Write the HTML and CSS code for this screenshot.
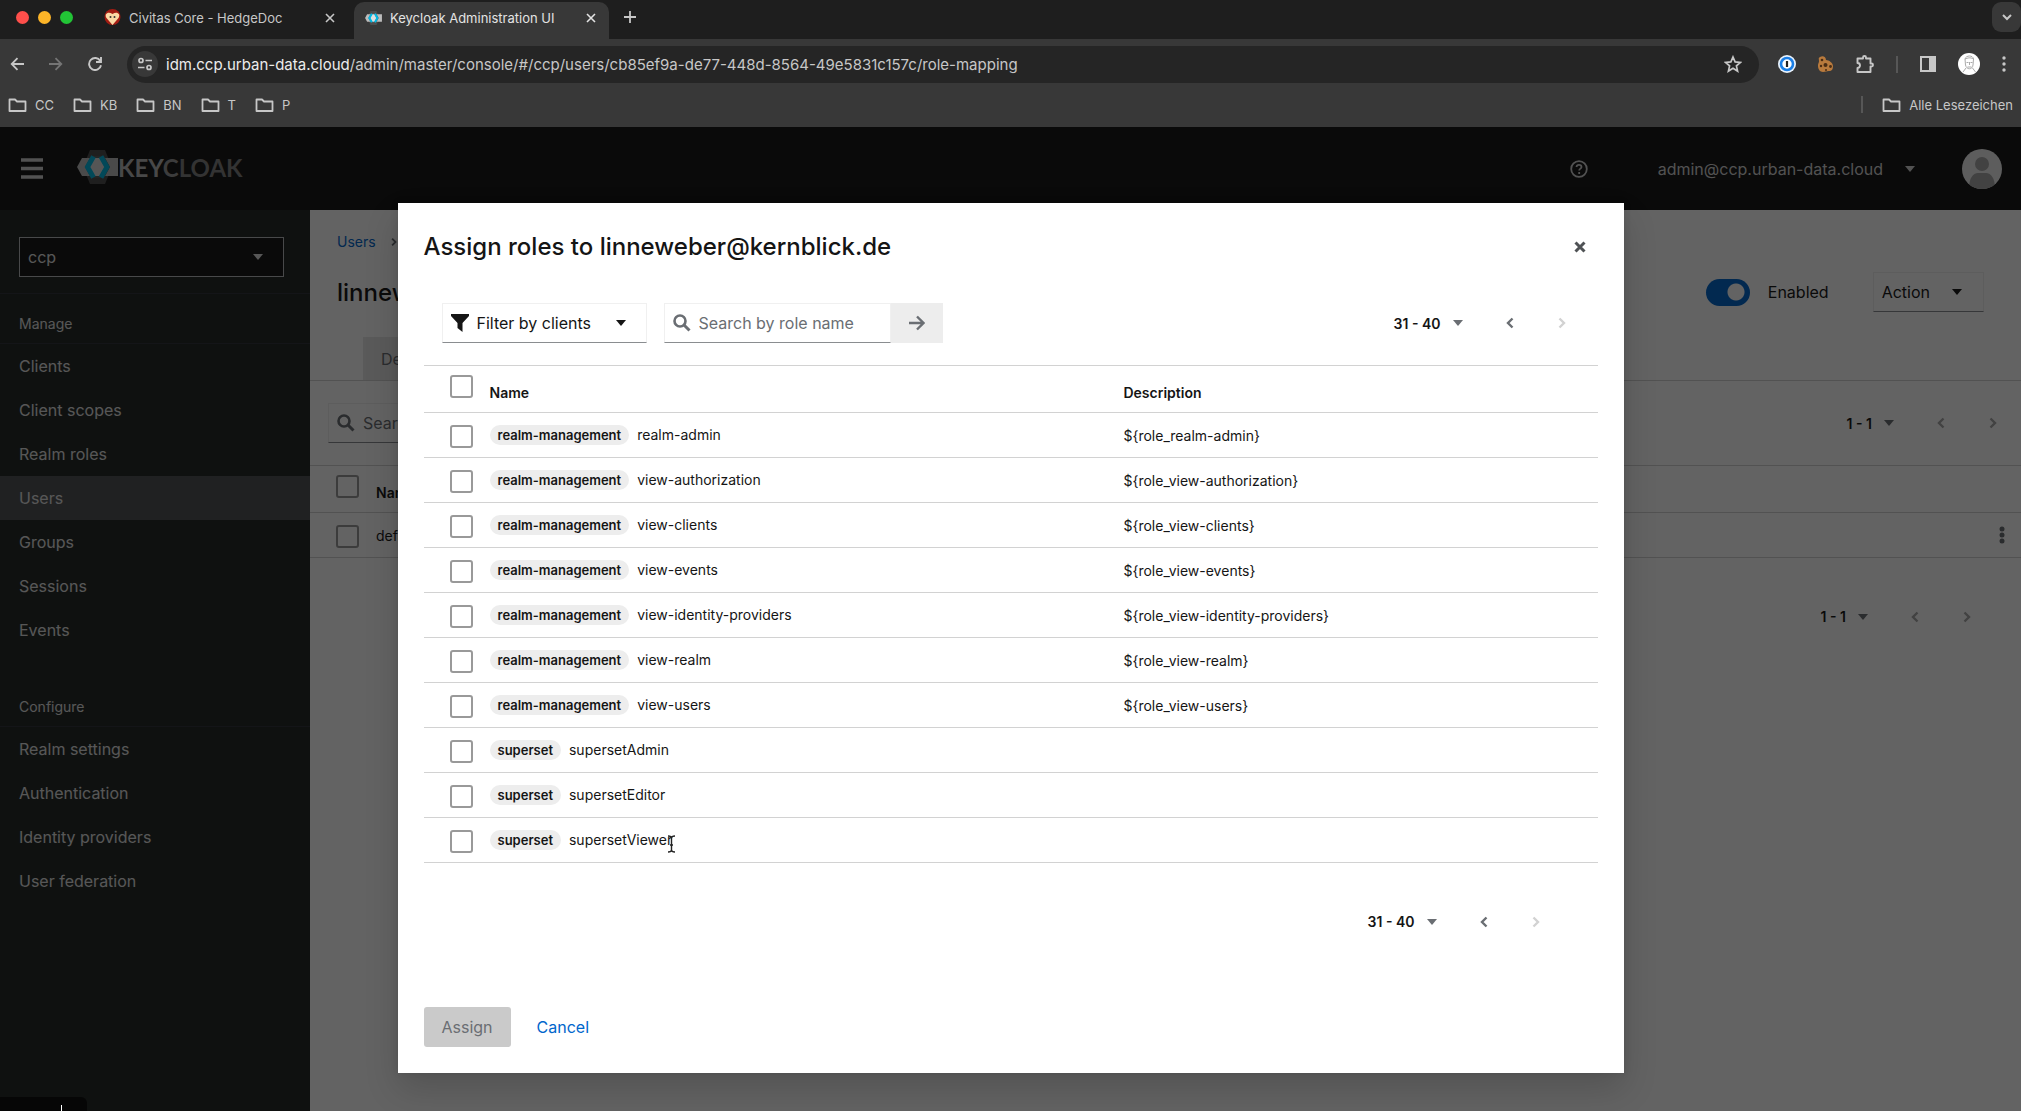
FILE: index.html
```
<!DOCTYPE html>
<html lang="en">
<head>
    <meta charset="UTF-8">
    <meta name="viewport" content="width=device-width, initial-scale=1.0">
    <title>Keycloak Administration UI</title>
    <link rel="stylesheet" href="styles.css">
</head>
<body>
    <!-- shared icons -->
    <svg class="sprite" aria-hidden="true">
        <symbol id="folder" viewBox="0 0 19 16"><path d="M1.500 2.500h5.500l2 2h8.500v9.500h-16z" fill="none" stroke="currentColor" stroke-width="1.800" stroke-linejoin="round"/></symbol>
        <symbol id="cross" viewBox="0 0 10 10"><path d="M1 1l8 8M9 1l-8 8" fill="none" stroke="currentColor" stroke-width="1.600"/></symbol>
        <symbol id="caret" viewBox="0 0 10 6"><path d="M0 0h10L5 6z" fill="currentColor"/></symbol>
        <symbol id="left" viewBox="0 0 8 12"><path d="M6.500 1.500L2 6l4.500 4.500" fill="none" stroke="currentColor" stroke-width="2.400"/></symbol>
        <symbol id="right" viewBox="0 0 8 12"><path d="M1.500 1.500L6 6l-4.500 4.500" fill="none" stroke="currentColor" stroke-width="2.400"/></symbol>
        <symbol id="search" viewBox="0 0 18 18"><circle cx="7" cy="7" r="5.500" fill="none" stroke="currentColor" stroke-width="2.600"/><path d="M11 11l5.500 5.500" stroke="currentColor" stroke-width="3"/></symbol>
        <symbol id="dots" viewBox="0 0 4 18"><circle cx="2" cy="3" r="1.700"/><circle cx="2" cy="9" r="1.700"/><circle cx="2" cy="15" r="1.700"/></symbol>
        <symbol id="keycloak" viewBox="0 0 41 34"><path d="M13 0h15l7 17-7 17H13L6 17z" fill="#4d4d4d"/><path d="M5 8h36v18H5L0 17z" fill="#bdbdbd"/><path d="M14 6h13l6 11-6 11H14L8 17z" fill="#5a5a5a"/><path d="M17 8h6l5 9-5 9h-6l-5-9z" fill="#dedede"/><path d="M16.500 6.500L10.500 17l6 10.500M24 6.500L30 17l-6 10.500" fill="none" stroke="#00b8e3" stroke-width="5"/></symbol>
    </svg>

    <header class="browser">
        <div class="tab-strip">
            <div class="lights"><span class="light red"></span><span class="light yellow"></span><span class="light green"></span></div>
            <div class="tab">
                <svg width="17" height="17" viewBox="0 0 17 17"><circle cx="8.500" cy="8" r="8" fill="#a31c13"/><path d="M8.500 16L2.500 9C0 5 4 2 8.500 5 13 2 17 5 14.500 9z" fill="#fbd9a5"/><circle cx="6.500" cy="8" r="1" fill="#333"/><circle cx="10.500" cy="8" r="1" fill="#333"/></svg>
                <span class="tab-title">Civitas Core - HedgeDoc</span>
                <button class="icon-button" aria-label="Close tab"><svg width="10" height="10"><use href="#cross"/></svg></button>
            </div>
            <div class="tab active">
                <svg width="17" height="14"><use href="#keycloak"/></svg>
                <span class="tab-title">Keycloak Administration UI</span>
                <button class="icon-button" aria-label="Close tab"><svg width="10" height="10"><use href="#cross"/></svg></button>
            </div>
            <button class="icon-button new-tab" aria-label="New tab"><svg width="12" height="12" viewBox="0 0 12 12"><path d="M6 0v12M0 6h12" stroke="currentColor" stroke-width="1.800"/></svg></button>
            <button class="icon-button tab-search" aria-label="Search tabs"><svg width="10" height="7" viewBox="0 0 10 7"><path d="M1 1l4 4 4-4" fill="none" stroke="currentColor" stroke-width="2"/></svg></button>
        </div>
        <div class="toolbar">
            <button class="icon-button nav-button" aria-label="Back"><svg width="14" height="14" viewBox="0 0 14 14"><path d="M14 7H2M7.500 1.200L1.700 7l5.800 5.800" fill="none" stroke="currentColor" stroke-width="1.800"/></svg></button>
            <button class="icon-button nav-button faded" aria-label="Forward"><svg width="14" height="14" viewBox="0 0 14 14"><path d="M0 7h12M6.500 1.200L12.300 7l-5.800 5.800" fill="none" stroke="currentColor" stroke-width="1.800"/></svg></button>
            <button class="icon-button nav-button" aria-label="Reload"><svg width="14" height="14" viewBox="0 0 14 14"><path d="M12.300 4A6 6 0 1 0 13 8.200M13 0v5H8" fill="none" stroke="currentColor" stroke-width="1.900"/></svg></button>
            <div class="omnibox">
                <button class="icon-button site-info" aria-label="Site information"><svg width="14" height="14" viewBox="0 0 14 14"><g fill="none" stroke="currentColor" stroke-width="1.700"><circle cx="3" cy="3.500" r="2"/><path d="M7.500 3.500H14M0 10.500h6.500"/><circle cx="11" cy="10.500" r="2"/></g></svg></button>
                <a class="url" href="#"><span class="host">idm.ccp.urban-data.cloud</span>/admin/master/console/#/ccp/users/cb85ef9a-de77-448d-8564-49e5831c157c/role-mapping</a>
                <button class="icon-button" aria-label="Bookmark"><svg width="18" height="18" viewBox="0 0 18 18"><path d="M9 2l2.100 4.900 5.300.5-4 3.500 1.200 5.200L9 13.300l-4.600 2.800 1.200-5.200-4-3.500 5.300-.5z" fill="none" stroke="currentColor" stroke-width="1.700"/></svg></button>
            </div>
            <div class="extensions">
                <button class="icon-button" aria-label="1Password"><svg width="18" height="18" viewBox="0 0 18 18"><circle cx="9" cy="9" r="9" fill="#e8f2fc"/><circle cx="9" cy="9" r="6" fill="#fff" stroke="#1a7ee6" stroke-width="2.600"/><path d="M9 6v6" stroke="#222" stroke-width="2.200"/></svg></button>
                <button class="icon-button" aria-label="Cookies"><svg width="16" height="16" viewBox="0 0 16 16"><path d="M2 1c3-2 6 0 6 3 3 0 7 3 7 6s-1 5-4 5-3 1-6 1-5-3-5-6 1-3 1-5-1-3 1-4z" fill="#b87a3d"/><g fill="#4a2d14"><circle cx="4" cy="4" r="1.300"/><circle cx="7.500" cy="9" r="2"/><circle cx="3" cy="10" r="1.200"/><circle cx="12.500" cy="10.500" r="1.400"/><circle cx="8" cy="14" r="1"/></g></svg></button>
                <button class="icon-button" aria-label="Extensions"><svg width="18" height="18" viewBox="0 0 18 18"><path d="M1.500 3.500h5.500V2.500a1.500 1.500 0 0 1 3 0v1h4.500v5H15.500a1.500 1.500 0 0 1 0 3h-1V17h-13v-4a2.500 2.500 0 0 0 0-5z" fill="none" stroke="currentColor" stroke-width="1.900" stroke-linejoin="round"/></svg></button>
                <span class="divider"></span>
                <button class="icon-button" aria-label="Side panel"><svg width="16" height="16" viewBox="0 0 16 16"><path d="M1 1h14v14H1z" fill="none" stroke="currentColor" stroke-width="2"/><path d="M9 1h6v14H9z" fill="currentColor"/></svg></button>
                <button class="icon-button" aria-label="Profile"><svg width="22" height="22" viewBox="0 0 22 22"><circle cx="11" cy="11" r="11" fill="#fff"/><g fill="none" stroke="#aaa" stroke-width="1"><path d="M7 6c1-4 8-4 8.500 0l-.5 6c-.5 5-6.500 5-7.500 0zM7 6c3-1 5-2 8.500 0M8 15l-3 4M14.500 15l3 4M8.500 9.500h2M12.500 9.500h2M11.500 9v3M9.500 14h4"/></g></svg></button>
                <button class="icon-button" aria-label="Menu"><svg width="4" height="18" fill="currentColor"><use href="#dots"/></svg></button>
            </div>
        </div>
        <nav class="bookmarks" aria-label="Bookmarks">
            <a href="#"><svg width="19" height="16"><use href="#folder"/></svg>CC</a>
            <a href="#"><svg width="19" height="16"><use href="#folder"/></svg>KB</a>
            <a href="#"><svg width="19" height="16"><use href="#folder"/></svg>BN</a>
            <a href="#"><svg width="19" height="16"><use href="#folder"/></svg>T</a>
            <a href="#"><svg width="19" height="16"><use href="#folder"/></svg>P</a>
            <span class="divider"></span>
            <a href="#"><svg width="19" height="16"><use href="#folder"/></svg>Alle Lesezeichen</a>
        </nav>
    </header>

    <div class="app">
        <header class="masthead">
            <button class="icon-button" aria-label="Toggle navigation"><svg width="24" height="21" viewBox="0 0 24 21"><path d="M1 2h22M1 10.500h22M1 19h22" stroke="currentColor" stroke-width="3.500"/></svg></button>
            <a class="logo" href="#"><svg width="41" height="34"><use href="#keycloak"/></svg><span>KEY<span class="logo-mid">C</span><span class="logo-dark">LOAK</span></span></a>
            <button class="icon-button help" aria-label="Help"><svg width="18" height="18" viewBox="0 0 18 18"><g fill="none" stroke="currentColor" stroke-width="1.800"><circle cx="9" cy="9" r="7.800"/><path d="M6.500 7c.3-3 5-2.700 5 0 0 1.700-2.300 1.600-2.300 3.500M9.200 12v2"/></g></svg></button>
            <button class="user-menu">admin@ccp.urban-data.cloud<svg width="10" height="6"><use href="#caret"/></svg></button>
            <svg class="avatar" width="40" height="40" viewBox="0 0 40 40"><defs><clipPath id="disc"><circle cx="20" cy="20" r="20"/></clipPath></defs><circle cx="20" cy="20" r="20" fill="#f0f0f0"/><g fill="#a8a8a8" clip-path="url(#disc)"><circle cx="20" cy="15" r="7"/><path d="M7 40c0-11 4-16 9-16h8c5 0 9 5 9 16z"/></g></svg>
        </header>

        <nav class="sidebar" aria-label="Main">
            <div class="realm">
                <select aria-label="Realm"><option>ccp</option></select>
                <svg class="select-caret" width="10" height="6"><use href="#caret"/></svg>
            </div>
            <h2>Manage</h2>
            <ul>
                <li><a href="#">Clients</a></li>
                <li><a href="#">Client scopes</a></li>
                <li><a href="#">Realm roles</a></li>
                <li><a class="current" href="#">Users</a></li>
                <li><a href="#">Groups</a></li>
                <li><a href="#">Sessions</a></li>
                <li><a href="#">Events</a></li>
            </ul>
            <h2 class="configure">Configure</h2>
            <ul>
                <li><a href="#">Realm settings</a></li>
                <li><a href="#">Authentication</a></li>
                <li><a href="#">Identity providers</a></li>
                <li><a href="#">User federation</a></li>
            </ul>
        </nav>

        <main class="content">
            <div class="breadcrumb"><a href="#">Users</a><svg width="6" height="10"><use href="#right"/></svg></div>
            <div class="title-row">
                <h1>linneweber@kernblick.de</h1>
                <label class="switch"><input type="checkbox" checked>Enabled</label>
                <button class="control action">Action<svg width="10" height="6"><use href="#caret"/></svg></button>
            </div>
            <div class="tabs"><button>Details</button></div>
            <div class="table-tools">
                <label class="control search-box"><svg width="18" height="18"><use href="#search"/></svg><input type="text" aria-label="Search by name" placeholder="Search by name"></label>
                <div class="pagination">
                    <button class="range">1 - 1<svg width="10" height="6"><use href="#caret"/></svg></button>
                    <button class="page" disabled aria-label="Previous"><svg width="8" height="12"><use href="#left"/></svg></button>
                    <button class="page" disabled aria-label="Next"><svg width="8" height="12"><use href="#right"/></svg></button>
                </div>
            </div>
            <table class="grid">
                <thead>
                    <tr><th class="check"><input type="checkbox" aria-label="Select all"></th><th class="name">Name</th><th></th></tr>
                </thead>
                <tbody>
                    <tr><td class="check"><input type="checkbox" aria-label="Select row"></td><td>default-roles-ccp</td><td class="row-menu"><button class="icon-button" aria-label="Actions"><svg width="6" height="18" viewBox="0 0 6 18" fill="currentColor"><circle cx="3" cy="3" r="2.500"/><circle cx="3" cy="9" r="2.500"/><circle cx="3" cy="15" r="2.500"/></svg></button></td></tr>
                </tbody>
            </table>
            <div class="pagination bottom">
                <button class="range">1 - 1<svg width="10" height="6"><use href="#caret"/></svg></button>
                <button class="page" disabled aria-label="Previous"><svg width="8" height="12"><use href="#left"/></svg></button>
                <button class="page" disabled aria-label="Next"><svg width="8" height="12"><use href="#right"/></svg></button>
            </div>
        </main>

        <div class="backdrop">
            <section class="modal" role="dialog" aria-labelledby="modal-title">
                <div class="modal-header">
                    <h2 id="modal-title">Assign roles to linneweber@kernblick.de</h2>
                    <button class="icon-button" aria-label="Close"><svg width="12" height="12" viewBox="0 0 12 12"><path d="M1.500 1.500l9 9M10.500 1.500l-9 9" stroke="currentColor" stroke-width="3"/></svg></button>
                </div>
                <div class="modal-tools">
                    <div class="control filter">
                        <svg width="18" height="18" viewBox="0 0 18 18"><path d="M0 0h18v2l-6.500 7v9L6.500 14V9L0 2z" fill="currentColor"/></svg>
                        <select aria-label="Filter"><option>Filter by clients</option></select>
                        <svg class="select-caret" width="10" height="6"><use href="#caret"/></svg>
                    </div>
                    <label class="control search-box"><svg width="18" height="18"><use href="#search"/></svg><input type="text" aria-label="Search by role name" placeholder="Search by role name"></label>
                    <button class="go" aria-label="Search"><svg width="16" height="16" viewBox="0 0 16 16"><path d="M0 8h14M8 1.500L14.500 8 8 14.500" fill="none" stroke="currentColor" stroke-width="2.400"/></svg></button>
                    <div class="pagination">
                        <button class="range">31 - 40<svg width="10" height="6"><use href="#caret"/></svg></button>
                        <button class="page" aria-label="Previous"><svg width="8" height="12"><use href="#left"/></svg></button>
                        <button class="page" disabled aria-label="Next"><svg width="8" height="12"><use href="#right"/></svg></button>
                    </div>
                </div>
                <table class="grid">
                    <thead>
                        <tr><th class="check"><input type="checkbox" aria-label="Select all roles"></th><th class="name">Name</th><th>Description</th></tr>
                    </thead>
                    <tbody>
                        <tr><td class="check"><input type="checkbox" aria-label="realm-admin"></td><td><span class="badge">realm-management</span>realm-admin</td><td>${role_realm-admin}</td></tr>
                        <tr><td class="check"><input type="checkbox" aria-label="view-authorization"></td><td><span class="badge">realm-management</span>view-authorization</td><td>${role_view-authorization}</td></tr>
                        <tr><td class="check"><input type="checkbox" aria-label="view-clients"></td><td><span class="badge">realm-management</span>view-clients</td><td>${role_view-clients}</td></tr>
                        <tr><td class="check"><input type="checkbox" aria-label="view-events"></td><td><span class="badge">realm-management</span>view-events</td><td>${role_view-events}</td></tr>
                        <tr><td class="check"><input type="checkbox" aria-label="view-identity-providers"></td><td><span class="badge">realm-management</span>view-identity-providers</td><td>${role_view-identity-providers}</td></tr>
                        <tr><td class="check"><input type="checkbox" aria-label="view-realm"></td><td><span class="badge">realm-management</span>view-realm</td><td>${role_view-realm}</td></tr>
                        <tr><td class="check"><input type="checkbox" aria-label="view-users"></td><td><span class="badge">realm-management</span>view-users</td><td>${role_view-users}</td></tr>
                        <tr><td class="check"><input type="checkbox" aria-label="supersetAdmin"></td><td><span class="badge">superset</span>supersetAdmin</td><td></td></tr>
                        <tr><td class="check"><input type="checkbox" aria-label="supersetEditor"></td><td><span class="badge">superset</span>supersetEditor</td><td></td></tr>
                        <tr><td class="check"><input type="checkbox" aria-label="supersetViewer"></td><td><span class="badge">superset</span><span class="hovered">supersetViewer<svg class="cursor" width="9" height="18" viewBox="0 0 9 18"><path d="M1 1c2 0 3.500.5 3.500 2v12c0 1.500-1.500 2-3.500 2M8 1C6 1 4.500 1.500 4.500 3v12c0 1.500 1.500 2 3.500 2M3 10h3" fill="none" stroke="#222" stroke-width="1.400"/></svg></span></td><td></td></tr>
                    </tbody>
                </table>
                <div class="pagination bottom">
                    <button class="range">31 - 40<svg width="10" height="6"><use href="#caret"/></svg></button>
                    <button class="page" aria-label="Previous"><svg width="8" height="12"><use href="#left"/></svg></button>
                    <button class="page" disabled aria-label="Next"><svg width="8" height="12"><use href="#right"/></svg></button>
                </div>
                <div class="modal-footer">
                    <button class="assign" disabled>Assign</button>
                    <button class="cancel">Cancel</button>
                </div>
            </section>
        </div>
        <div class="dock-hint"></div>
    </div>
</body>
</html>
```
FILE: styles.css
```
* {
    box-sizing: border-box;
}
body {
    margin: 0;
    min-height: 100vh;
    display: flex;
    flex-direction: column;
    font-family: Inter, "Open Sans", sans-serif;
    font-size: 16px;
    color: #151515;
}
button, input, select {
    font: inherit;
    color: inherit;
}
button {
    background: none;
    border: none;
    padding: 0;
}
svg {
    flex: none;
    display: block;
}
a {
    color: inherit;
    text-decoration: none;
}
h1, h2, ul {
    margin: 0;
    padding: 0;
    font-weight: 400;
    list-style: none;
}
.sprite {
    display: none;
}
.icon-button {
    display: flex;
    align-items: center;
    justify-content: center;
}

/* browser window */
.browser {
    background-color: #383838;
    color: #c7c7c7;
    font-size: 13px;
}
.tab-strip {
    display: flex;
    align-items: center;
    height: 39px;
    background-color: #1e1e1e;
}
.lights {
    display: flex;
    gap: 9px;
    margin: 0 20px 5px 16px;
}
.light {
    width: 13px;
    height: 13px;
    border-radius: 50%;
}
.red { background-color: #fe4f4b; }
.yellow { background-color: #fdb528; }
.green { background-color: #22c436; }
.tab {
    display: flex;
    align-items: center;
    gap: 8px;
    width: 255px;
    height: 37px;
    padding: 0 13px 6px 11px;
    align-self: flex-end;
}
.tab-title {
    flex: 1;
}
.tab.active {
    margin-left: 6px;
    background-color: #383838;
    border-radius: 10px 10px 0 0;
    color: #e3e3e3;
}
.new-tab {
    margin: 0 auto 5px 15px;
}
.tab-search {
    width: 29px;
    height: 30px;
    margin-bottom: 5px;
    border-radius: 9px;
    background-color: #383838;
}
.toolbar {
    display: flex;
    align-items: center;
    height: 50px;
    padding: 0 15px 0 10px;
}
.nav-button {
    width: 14px;
    margin-right: 25px;
}
.faded {
    color: #757575;
}
.omnibox {
    flex: 1;
    display: flex;
    align-items: center;
    gap: 8px;
    height: 37px;
    padding: 0 17px 0 5px;
    border-radius: 19px;
    background-color: #252525;
}
.site-info {
    width: 26px;
    height: 26px;
    border-radius: 50%;
    background-color: #383838;
}
.url {
    flex: 1;
    font-size: 15px;
}
.host {
    color: #ececec;
}
.extensions {
    display: flex;
    align-items: center;
    gap: 22px;
    margin-left: 19px;
}
.divider {
    width: 2px;
    height: 17px;
    background-color: #575757;
}
.bookmarks {
    display: flex;
    align-items: center;
    gap: 19px;
    height: 38px;
    padding: 0 8px 7px;
}
.bookmarks a {
    display: flex;
    align-items: center;
    gap: 8px;
}
.bookmarks .divider {
    margin-left: auto;
}

/* admin console */
.app {
    position: relative;
    flex: 1;
    display: grid;
    grid-template: 83px 1fr / 310px 1fr;
}
.masthead {
    grid-column: 1 / -1;
    display: flex;
    align-items: center;
    padding: 0 19px 0 20px;
    background-color: #151515;
    color: #d2d2d2;
}
.logo {
    display: flex;
    align-items: center;
    margin-left: 33px;
    padding-bottom: 3px;
    font: 700 24px Lato, sans-serif;
    color: #b8b8b8;
}
.logo-mid { color: #999999; }
.logo-dark { color: #808080; }
.help {
    margin-left: auto;
}
.user-menu {
    display: flex;
    align-items: center;
    gap: 22px;
    margin: 0 47px 0 70px;
}
.sidebar {
    background-color: #222826;
    color: #e0e0e0;
}
.realm {
    position: relative;
    height: 84px;
    padding: 27px 26px 0 19px;
    border-bottom: 1px solid #30343a;
}
.realm select {
    width: 100%;
    height: 40px;
    padding: 0 8px;
    appearance: none;
    background-color: #151515;
    border: 1px solid #b8bbbe;
    border-radius: 0;
}
.select-caret {
    position: absolute;
    right: 47px;
    top: 44px;
    pointer-events: none;
}
.sidebar h2 {
    padding: 20px 19px 9px;
    font-size: 14px;
    line-height: 20px;
    border-bottom: 1px solid #30343a;
}
.sidebar .configure {
    padding-top: 45px;
}
.sidebar li a {
    display: block;
    padding: 0 19px;
    line-height: 44px;
}
.sidebar .current {
    background-color: #4f5255;
}
.content {
    background-color: #ffffff;
}
.breadcrumb {
    display: flex;
    align-items: center;
    gap: 15px;
    padding: 22px 27px 20px;
    font-size: 14px;
    line-height: 20px;
    color: #6a6e73;
}
.breadcrumb a {
    color: #0066cc;
}
.title-row {
    display: flex;
    align-items: center;
    padding: 0 37px 0 27px;
    height: 40px;
}
h1 {
    flex: 1;
    font-size: 24px;
    font-weight: 500;
}
.switch {
    display: flex;
    align-items: center;
    gap: 18px;
    margin-right: 44px;
}
.switch input {
    appearance: none;
    width: 44px;
    height: 27px;
    margin: 0;
    border-radius: 14px;
    background: radial-gradient(circle at 30px 13px, #ffffff 8px, #0066cc 9px);
}
.control {
    display: flex;
    align-items: center;
    height: 40px;
    border: 1px solid #f0f0f0;
    border-bottom-color: #8a8d90;
}
.action {
    gap: 22px;
    padding: 0 21px 0 8px;
}
.tabs {
    margin-top: 25px;
    padding-left: 53px;
    border-bottom: 1px solid #d2d2d2;
}
.tabs button {
    height: 43px;
    padding: 0 18px;
    background-color: #e8e8e8;
    color: #6a6e73;
}
.table-tools {
    display: flex;
    align-items: center;
    justify-content: space-between;
    padding: 22px 2px 22px 18px;
}
.search-box {
    width: 227px;
    padding-left: 8px;
    gap: 8px;
    color: #6a6e73;
}
.search-box input {
    flex: 1;
    min-width: 0;
    padding: 0;
    border: none;
    outline: none;
    background: none;
}
.search-box input::placeholder {
    color: #6a6e73;
    opacity: 1;
}

/* tables */
.grid {
    width: 100%;
    table-layout: fixed;
    border-collapse: collapse;
    border-top: 1px solid #d2d2d2;
    font-size: 14px;
}
.grid tr {
    height: 45px;
    border-bottom: 1px solid #d2d2d2;
}
.grid th, .grid td {
    padding: 0;
    text-align: left;
}
.grid th {
    height: 47px;
    padding-top: 7px;
    font-weight: 600;
}
.grid .check {
    width: 66px;
    padding: 3px 0 0 26px;
}
.grid th.check {
    padding: 0 0 6px 26px;
}
.grid .name {
    width: 54%;
}
.grid input {
    display: block;
    appearance: none;
    width: 23px;
    height: 23px;
    margin: 0;
    border: 2px solid #999999;
    border-radius: 3px;
}
.badge {
    display: inline-block;
    margin-right: 8px;
    padding: 0 8px;
    border-radius: 10px;
    background-color: #ededed;
    font-size: 13px;
    font-weight: 600;
    line-height: 20px;
}
.row-menu button {
    margin: 0 16px 0 auto;
    color: #6a6e73;
}
.hovered {
    position: relative;
}
.cursor {
    position: absolute;
    right: -4px;
    top: 4px;
}
.pagination {
    display: flex;
    align-items: center;
    font-size: 14px;
    font-weight: 600;
}
.range {
    display: flex;
    align-items: center;
    gap: 12px;
    margin-right: 21px;
}
.range svg, .page {
    color: #6a6e73;
}
.page {
    display: flex;
    justify-content: center;
    width: 52px;
}
.page:disabled {
    color: #d2d2d2;
}
.content .page:disabled {
    color: #a8a8a8;
}
.pagination.bottom {
    justify-content: flex-end;
    padding: 50px 28px 0 0;
}

/* assign roles dialog */
.backdrop {
    position: absolute;
    inset: 0;
    display: flex;
    justify-content: center;
    align-items: flex-start;
    padding: 76px 32px 32px;
    background-color: rgba(3, 3, 3, 0.62);
}
.modal {
    width: 1226px;
    max-width: 100%;
    padding: 28px 26px 26px;
    background-color: #ffffff;
    box-shadow: 0 16px 32px rgba(3, 3, 3, 0.16), 0 0 8px rgba(3, 3, 3, 0.1);
}
.modal-header {
    display: flex;
    align-items: center;
    justify-content: space-between;
    padding-right: 12px;
    line-height: 32px;
    color: #4f5255;
}
.modal-header h2 {
    font-size: 24px;
    font-weight: 500;
    color: #151515;
}
.modal-tools {
    display: flex;
    align-items: center;
    padding: 40px 10px 22px 18px;
}
.filter {
    position: relative;
    margin-right: 17px;
}
.filter > svg:first-child {
    margin: 0 -26px 0 8px;
}
.filter select {
    width: 203px;
    height: 100%;
    padding: 0 0 0 34px;
    appearance: none;
    background: none;
    border: none;
}
.filter .select-caret {
    right: 20px;
    top: 16px;
}
.go {
    display: flex;
    align-items: center;
    justify-content: center;
    width: 52px;
    height: 40px;
    background-color: #ededed;
    color: #6a6e73;
}
.modal-tools .pagination {
    margin-left: auto;
}
.modal .pagination.bottom {
    padding-right: 36px;
}
.modal-footer {
    display: flex;
    gap: 26px;
    margin-top: 77px;
}
.assign {
    height: 40px;
    padding: 0 18px;
    border-radius: 3px;
    background-color: #cacaca;
    color: #6a6e73;
}
.cancel {
    color: #0066cc;
}

/* edge of the overlay at the bottom of the screen */
.dock-hint {
    position: absolute;
    left: 0;
    bottom: 0;
    width: 87px;
    height: 14px;
    border-radius: 0 6px 0 0;
    background: linear-gradient(#ffffff, #ffffff) 61px 8px / 1px 6px no-repeat #060606;
}
```
